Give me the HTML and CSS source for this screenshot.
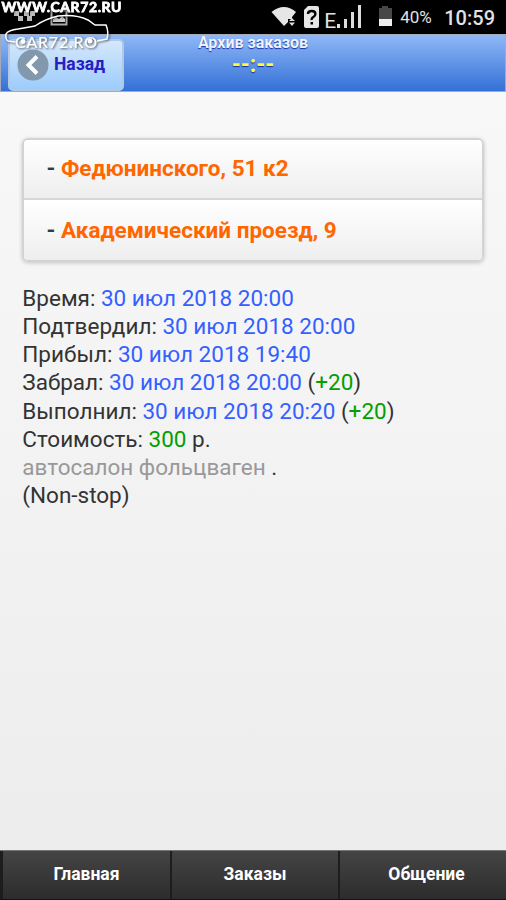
FILE: index.html
```html
<!DOCTYPE html>
<html lang="ru">
<head>
<meta charset="utf-8">
<title>Архив заказов</title>
<link rel="stylesheet" href="styles.css">
</head>
<body>
<div class="screen">
  <div class="status">
    <svg class="status-icons" width="506" height="34" viewBox="0 0 506 34">
      <path fill="#bbb" d="M14 11h5v5h-5zM24 11h5v5h-5zM30 11h5v5h-5zM18 16h5v5h-5zM27 16h5v5h-5z"/>
      <rect x="51.500" y="10.500" width="15" height="14" fill="none" stroke="#aaa" stroke-width="2"/>
      <path fill="#ccc" d="M53 22v-3l3-2 3 2 3-3 3 3v3z"/>
      <path fill="#e6e6e6" d="M271.500 12Q284 2 296 12L292 17V19H288V22L284 26z"/>
      <path fill="#ddd" d="M289 21l3-3 3 3zM289 22.500h6l-3 3.500z"/>
      <path fill="#e6e6e6" d="M308 6h9q2 0 2 2v18q0 2-2 2h-11q-2 0-2-2V10z"/>
      <path fill="none" stroke="#000" stroke-width="2.400" d="M308 14q0-3 3.700-3t3.700 3q0 2-2 3t-1.700 3"/>
      <rect x="310.500" y="22" width="2.500" height="2.500"/>
      <path fill="#ddd" d="M337 24h3v4h-3zM344 19h3v9h-3zM351 12h3v16h-3zM358 5h3v23h-3z"/>
      <path fill="#484848" d="M382 6h6v2h4v11h-13V8h3z"/>
      <path fill="#eee" d="M379 19h13v7h-13z"/>
    </svg>
    <span class="net">E</span>
    <span class="battery">40%</span>
    <span class="clock">10:59</span>
  </div>
  <header class="header">
    <a class="back">
      <svg width="32" height="32" viewBox="0 0 32 32"><circle cx="16" cy="16" r="15.500" fill="#8298ad"/><path d="M20 7.500L11.500 16l8.500 8.500" fill="none" stroke="#fff" stroke-width="4"/></svg>
      <span>Назад</span>
    </a>
    <div class="title">Архив заказов<div class="timer">--:--</div></div>
  </header>
  <main class="content">
    <ul class="route">
      <li>- <b>Федюнинского, 51 к2</b></li>
      <li>- <b>Академический проезд, 9</b></li>
    </ul>
    <div class="details">
      <div>Время: <i>30 июл 2018 20:00</i></div>
      <div>Подтвердил: <i>30 июл 2018 20:00</i></div>
      <div>Прибыл: <i>30 июл 2018 19:40</i></div>
      <div>Забрал: <i>30 июл 2018 20:00</i> (<em>+20</em>)</div>
      <div>Выполнил: <i>30 июл 2018 20:20</i> (<em>+20</em>)</div>
      <div>Стоимость: <em>300</em> р.</div>
      <div><span class="note">автосалон фольцваген</span> .</div>
      <div>(Non-stop)</div>
    </div>
  </main>
  <nav class="nav"><a>Главная</a><a>Заказы</a><a>Общение</a></nav>
  <svg class="watermark" width="130" height="56" viewBox="0 0 130 56">
    <text class="wm-url" x="1.500" y="11.800" textLength="120">WWW.CAR72.RU</text>
    <g class="wm-car">
      <path d="M15 42L8 41Q5 39 6 34Q8 30 18 29L35 26Q45 19 58 16Q76 14 88 20L95 25L106 25Q109 32 107 39L97 41"/>
      <text x="15" y="48" textLength="82">CAR72.RO</text>
      <circle class="hub" cx="23" cy="41.500" r="2.500"/><circle class="hub" cx="90" cy="41" r="2.500"/>
    </g>
  </svg>
</div>
</body>
</html>
```
FILE: styles.css
```css
* { box-sizing: border-box; }
body { margin: 0; font-family: Roboto, sans-serif; }
.screen { position: relative; width: 506px; height: 900px; display: flex; flex-direction: column; overflow: hidden; background: #000; }
.status { position: relative; height: 34px; flex: none; display: flex; justify-content: flex-end; align-items: center; padding-right: 11px; color: #e2e2e2; }
.status-icons { position: absolute; left: 0; top: 0; }
.net { font-size: 21px; font-weight: 400; line-height: 20px; margin: 7px 64px 0 0; }
.battery { font-size: 17px; width: 31px; margin-right: 13px; white-space: nowrap; }
.clock { font-size: 20px; font-weight: 500; padding-top: 1px; }
.header { height: 58px; flex: none; position: relative; border: 1px solid #a3abb9; background: linear-gradient(#8fb8f7, #3470d6); display: flex; justify-content: center; }
.back { position: absolute; left: 7px; top: 4px; width: 116px; height: 52px; border: 2px solid #b3c9e2; border-radius: 5px; background: linear-gradient(#d5e8fc, #9dccfb); display: flex; align-items: center; padding: 0 0 1px 7px; gap: 5px; color: #2620c4; font-weight: 700; font-size: 17.500px; }
.back span { padding-bottom: 2px; }
.title { font-size: 16px; line-height: 18px; margin-top: -1px; font-weight: 700; text-align: center; color: #eef3ff; text-shadow: 0 1px 1px #1a2fa0; }
.timer { color: #ff3; font-size: 23px; line-height: 26px; }
.content { flex: 1; background: linear-gradient(#f8f8f8, #ededed); padding: 46px 22px 0; }
.route { list-style: none; margin: 0; padding: 0; border: 2px solid #d3d3d3; border-radius: 6px; overflow: hidden; box-shadow: 0 1px 4px #0003; height: 124px; font-size: 22.500px; font-weight: 700; color: #2f3e46; }
.route li { height: 58px; line-height: 56px; padding-left: 22.500px; background: linear-gradient(#fff, #eee); }
.route li + li { height: 62px; line-height: 60px; border-top: 2px solid #d6d6d6; }
.route b { color: #f60; font-weight: inherit; }
.details { margin-top: 22px; font-size: 22.500px; line-height: 28.120px; color: #333; white-space: nowrap; padding-left: .3px; }
.details i { font-style: normal; color: #3360ff; }
.details em { font-style: normal; color: #00a000; }
.note { color: #999; }
.nav { height: 50px; flex: none; display: grid; grid-template-columns: 172px 168px 1fr; border-top: 1px solid #777; border-bottom: 1px solid #111; background: linear-gradient(#444, #2c2c2c); }
.nav a { display: flex; align-items: center; justify-content: center; color: #fff; font-size: 17.500px; font-weight: 700; padding-bottom: 3px; border-right: 2px solid #1d1d1d; }
.nav a:first-child { border-left: 3px solid #1d1d1d; }
.nav a:last-child { border-right: 0; padding-left: 7px; }
.watermark { position: absolute; left: 0; top: 0; filter: drop-shadow(1px 1px 1px #0009); }
.wm-url { font: 700 14px Lato, sans-serif; fill: #fff; stroke: #fff; stroke-width: .8; }
.wm-car path { fill: none; stroke: #fff; stroke-width: 1.500; }
.wm-car text { font: 400 16px Lato, sans-serif; fill: #fff; stroke: #fff; stroke-width: .2; }
.hub { fill: #fff; }
```
